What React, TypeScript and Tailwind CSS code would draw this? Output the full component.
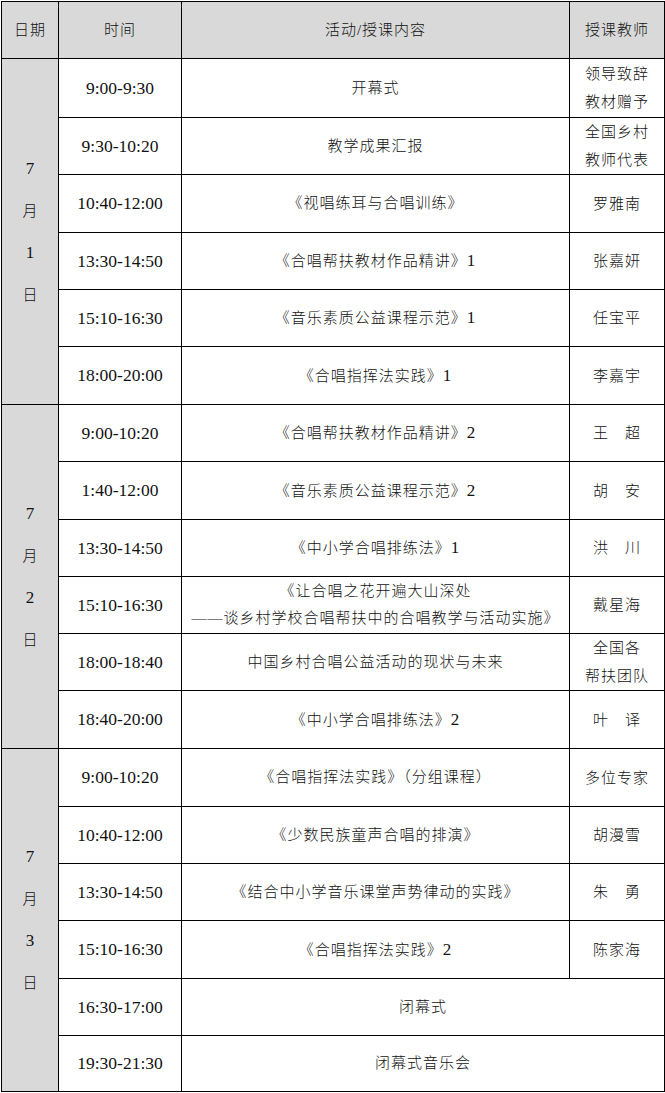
import React from 'react';

type Row = {
  time: string;
  content: React.ReactNode;
  teacher?: React.ReactNode;
  h: string;
};

type Day = {
  label: string[];
  rows: Row[];
};

const cjk = '"Liberation Serif", "Noto Sans CJK SC", serif';

// trailing course number, set a touch larger like the Latin text
const N = ({ n }: { n: string }) => <span className="text-[17px]">{n}</span>;

const days: Day[] = [
  {
    label: ['7', '月', '1', '日'],
    rows: [
      { time: '9:00-9:30', content: '开幕式', teacher: <>领导致辞<br />教材赠予</>, h: 'h-[59px]' },
      { time: '9:30-10:20', content: '教学成果汇报', teacher: <>全国乡村<br />教师代表</>, h: 'h-[57px]' },
      { time: '10:40-12:00', content: '《视唱练耳与合唱训练》', teacher: '罗雅南', h: 'h-[58px]' },
      { time: '13:30-14:50', content: <>《合唱帮扶教材作品精讲》<N n="1" /></>, teacher: '张嘉妍', h: 'h-[57px]' },
      { time: '15:10-16:30', content: <>《音乐素质公益课程示范》<N n="1" /></>, teacher: '任宝平', h: 'h-[57px]' },
      { time: '18:00-20:00', content: <>《合唱指挥法实践》<N n="1" /></>, teacher: '李嘉宇', h: 'h-[58px]' },
    ],
  },
  {
    label: ['7', '月', '2', '日'],
    rows: [
      { time: '9:00-10:20', content: <>《合唱帮扶教材作品精讲》<N n="2" /></>, teacher: '王　超', h: 'h-[57px]' },
      { time: '1:40-12:00', content: <>《音乐素质公益课程示范》<N n="2" /></>, teacher: '胡　安', h: 'h-[58px]' },
      { time: '13:30-14:50', content: <>《中小学合唱排练法》<N n="1" /></>, teacher: '洪　川', h: 'h-[57px]' },
      {
        time: '15:10-16:30',
        content: <>《让合唱之花开遍大山深处<br />——谈乡村学校合唱帮扶中的合唱教学与活动实施》</>,
        teacher: '戴星海',
        h: 'h-[57px]',
      },
      { time: '18:00-18:40', content: '中国乡村合唱公益活动的现状与未来', teacher: <>全国各<br />帮扶团队</>, h: 'h-[57px]' },
      { time: '18:40-20:00', content: <>《中小学合唱排练法》<N n="2" /></>, teacher: '叶　译', h: 'h-[58px]' },
    ],
  },
  {
    label: ['7', '月', '3', '日'],
    rows: [
      { time: '9:00-10:20', content: '《合唱指挥法实践》（分组课程）', teacher: '多位专家', h: 'h-[58px]' },
      { time: '10:40-12:00', content: '《少数民族童声合唱的排演》', teacher: '胡漫雪', h: 'h-[57px]' },
      { time: '13:30-14:50', content: '《结合中小学音乐课堂声势律动的实践》', teacher: '朱　勇', h: 'h-[57px]' },
      { time: '15:10-16:30', content: <>《合唱指挥法实践》<N n="2" /></>, teacher: '陈家海', h: 'h-[58px]' },
      { time: '16:30-17:00', content: '闭幕式', h: 'h-[57px]' },
      { time: '19:30-21:30', content: '闭幕式音乐会', h: 'h-[56px]' },
    ],
  },
];

const cell = 'border border-black text-center align-middle';

export default function App() {
  return (
    <div className="bg-white pl-px pt-px font-light text-[#111]" style={{ fontFamily: cjk }}>
      <table className="w-[663px] table-fixed border-collapse">
        <colgroup>
          <col className="w-[57px]" />
          <col className="w-[123px]" />
          <col className="w-[388px]" />
          <col className="w-[95px]" />
        </colgroup>
        <thead>
          <tr className="h-[57px] bg-[#d9d9d9] text-[15px] tracking-[1px]">
            <th className={`${cell} font-light`}>日期</th>
            <th className={`${cell} font-light`}>时间</th>
            <th className={`${cell} font-light`}>活动/授课内容</th>
            <th className={`${cell} font-light`}>授课教师</th>
          </tr>
        </thead>
        <tbody>
          {days.map((day) =>
            day.rows.map((row, i) => (
              <tr key={day.label[2] + row.time} className={row.h}>
                {i === 0 && (
                  <td rowSpan={day.rows.length} className={`${cell} bg-[#d9d9d9]`}>
                    <div className="flex flex-col items-center text-[15px] leading-[42px]">
                      {day.label.map((c, k) => (
                        <span key={k} className={k % 2 === 0 ? 'text-[17px]' : ''}>
                          {c}
                        </span>
                      ))}
                    </div>
                  </td>
                )}
                <td className={`${cell} text-[17.5px]`}>{row.time}</td>
                {row.teacher !== undefined ? (
                  <>
                    <td className={`${cell} text-[15px] leading-[27px] tracking-[1px]`}>{row.content}</td>
                    <td className={`${cell} text-[15px] leading-[28px] tracking-[1px]`}>{row.teacher}</td>
                  </>
                ) : (
                  <td colSpan={2} className={`${cell} text-[15px] tracking-[1px]`}>
                    {row.content}
                  </td>
                )}
              </tr>
            ))
          )}
        </tbody>
      </table>
    </div>
  );
}
